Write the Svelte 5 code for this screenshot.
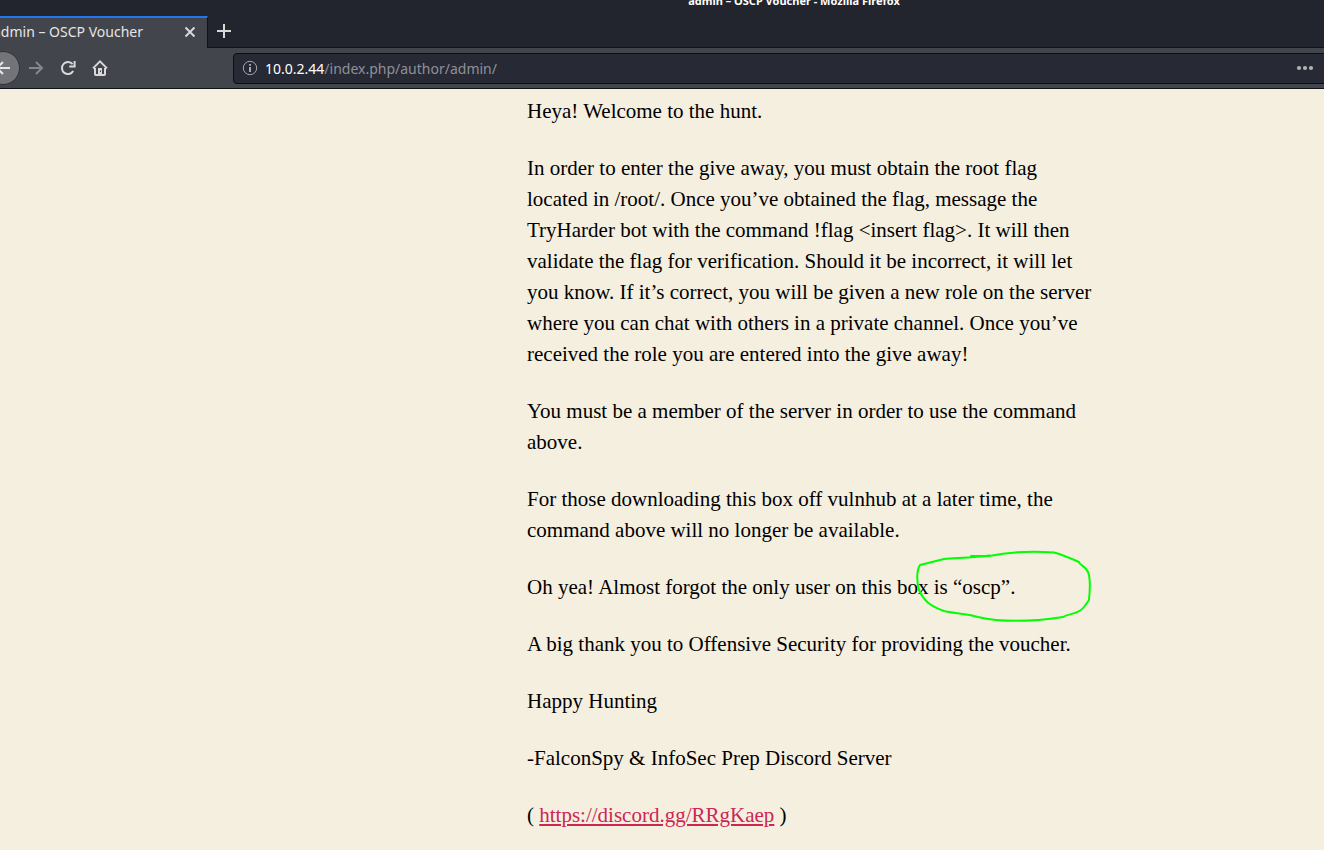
<script>
  const before = [
    'Heya! Welcome to the hunt.',
    'In order to enter the give away, you must obtain the root flag located in /root/. Once you’ve obtained the flag, message the TryHarder bot with the command !flag <insert flag>. It will then validate the flag for verification. Should it be incorrect, it will let you know. If it’s correct, you will be given a new role on the server where you can chat with others in a private channel. Once you’ve received the role you are entered into the give away!',
    'You must be a member of the server in order to use the command above.',
    'For those downloading this box off vulnhub at a later time, the command above will no longer be available.'
  ];
  const after = [
    'A big thank you to Offensive Security for providing the voucher.',
    'Happy Hunting',
    '-FalconSpy & InfoSec Prep Discord Server'
  ];
</script>

<div class="window">
  <header>
    <div class="titlebar"><span class="title">admin – OSCP Voucher - Mozilla Firefox</span></div>
    <div class="tabs">
      <div class="tab">
        <span class="tab-name">admin – OSCP Voucher</span>
        <button class="close" aria-label="Close tab">
          <svg width="12" height="12" viewBox="0 0 12 12"><path d="M1.5 1.5l9 9M10.5 1.5l-9 9" /></svg>
        </button>
      </div>
      <button class="new" aria-label="New tab">
        <svg width="16" height="16" viewBox="0 0 16 16"><path d="M8 1v14M1 8h14" /></svg>
      </button>
    </div>
    <nav class="toolbar">
      <button class="back" aria-label="Back">
        <svg width="16" height="16" viewBox="0 0 16 16"><path d="M15 8H2M8 2L2 8l6 6" /></svg>
      </button>
      <button class="tool dim" aria-label="Forward">
        <svg width="16" height="16" viewBox="0 0 16 16"><path d="M1 8h13M8 2l6 6-6 6" /></svg>
      </button>
      <button class="tool" aria-label="Reload">
        <svg width="16" height="16" viewBox="0 0 16 16"><path d="M13.2 11A6 6 0 1 1 12.6 4.2" /><path class="solid" d="M15.6 1v6.4H9.2V5.6h4.4V1z" /></svg>
      </button>
      <button class="tool" aria-label="Home">
        <svg width="16" height="16" viewBox="0 0 16 16"><path d="M1 8.4L8 1.4l7 7M3 8v6.2q0 .8.8.8h8.4q.8 0 .8-.8V8" /><path class="solid" fill-rule="evenodd" d="M6 8h4v7H6zM8 10.5v1.4h1v-1.4z" /></svg>
      </button>
      <div class="url">
        <svg class="info" width="16" height="16" viewBox="0 0 16 16"><circle cx="8" cy="8" r="6.7" /><path d="M8 7v5M8 4v1.8" /></svg>
        <a class="address" href="#top"><b>10.0.2.44</b>/index.php/author/admin/</a>
        <button class="more" aria-label="Page actions">
          <svg width="18" height="6" viewBox="0 0 18 6"><circle cx="3" cy="3" r="2.1" /><circle cx="9" cy="3" r="2.1" /><circle cx="15" cy="3" r="2.1" /></svg>
        </button>
      </div>
    </nav>
  </header>

  <main>
    <article>
      {#each before as text}<p>{text}</p>{/each}
      <p class="marked">
        Oh yea! Almost forgot the only user on this box is “oscp”.
        <svg class="mark" width="180" height="76" viewBox="912 548 180 76" aria-hidden="true">
          <path d="M971 556h18M989 555.5C975 557.5 955 558 944 559L920 565C916 571 917 583 919 590C924 601 930 606 944 611C958 614 968 614 978 617C1000 622 1030 622 1063 617C1069 613 1078 615 1084 607L1089 600C1090 590 1091 579 1088 572C1085 565 1080 566 1079 562C1070 558 1063 555 1054 552.5C1032 551 1008 552 989 556" />
        </svg>
      </p>
      {#each after as text}<p>{text}</p>{/each}
      <p>( <a href="https://discord.gg/RRgKaep">https://discord.gg/RRgKaep</a> )</p>
    </article>
  </main>
</div>

<style>
  :global(body) { margin: 0; background: #f5efe0; }
  .window { overflow: hidden; }
  header { background: #23252e; color: #e6e6e6; font-family: "Noto Sans", sans-serif; }
  button { display: flex; align-items: center; justify-content: center; padding: 0; border: 0; background: none; color: #d8d8d8; }
  svg { display: block; flex: none; fill: none; stroke: currentColor; stroke-width: 2; }
  .solid { fill: currentColor; stroke: none; }
  .titlebar { display: flex; align-items: flex-end; justify-content: center; height: 16px; padding-left: 264px; box-sizing: border-box; }
  .title { font-size: 11px; font-weight: 700; line-height: 16px; margin-bottom: 7px; color: #fff; }
  .tabs { display: flex; height: 32px; box-sizing: border-box; border-bottom: 1px solid #121319; }
  .tab { display: flex; align-items: center; justify-content: space-between; box-sizing: border-box; width: 208px; height: 32px; padding: 0 11px 2px 0; border-top: 2px solid #2277ee; border-right: 1px solid #121319; background: #42454b; }
  .tab-name { margin-left: -7px; font-size: 14px; line-height: 20px; white-space: nowrap; }
  .new { width: 32px; height: 30px; }
  .toolbar { display: flex; align-items: center; height: 41px; box-sizing: border-box; border-bottom: 1px solid #121319; background: #42454b; }
  .back { width: 34px; height: 34px; box-sizing: border-box; margin-left: -14px; border: 1px solid #303238; border-radius: 50%; background: #727479; color: #e6e6e6; }
  .tool { width: 32px; height: 32px; }
  .dim { color: #85878b; }
  .url { display: flex; flex: 1; align-items: center; box-sizing: border-box; height: 31px; margin: 0 -4px 0 117px; padding: 0 13px 0 8px; border: 1px solid #0d0e14; border-radius: 4px; background: #272935; }
  .info { color: #a6a7ab; stroke-width: 1; }
  .info path { stroke-width: 2; }
  .address { flex: 1; margin-left: 7px; color: #8f9197; font-size: 14px; line-height: 20px; padding-top: 1px; text-decoration: none; }
  .address b { color: #fff; font-weight: 400; }
  .more svg { fill: #b1b1b5; stroke: none; }
  main { display: grid; grid-template-columns: 527fr 572px 225fr; padding: 7px 0 18px; }
  article { grid-column: 2; color: #000; font: 21px/31px "Liberation Serif", serif; }
  p { margin: 0 0 26px; }
  p:last-child { margin: 0; }
  p a { color: #cd2653; }
  .marked { position: relative; }
  .mark { position: absolute; left: 385px; top: -24px; color: #0f0; stroke-linecap: round; stroke-linejoin: round; }
</style>
